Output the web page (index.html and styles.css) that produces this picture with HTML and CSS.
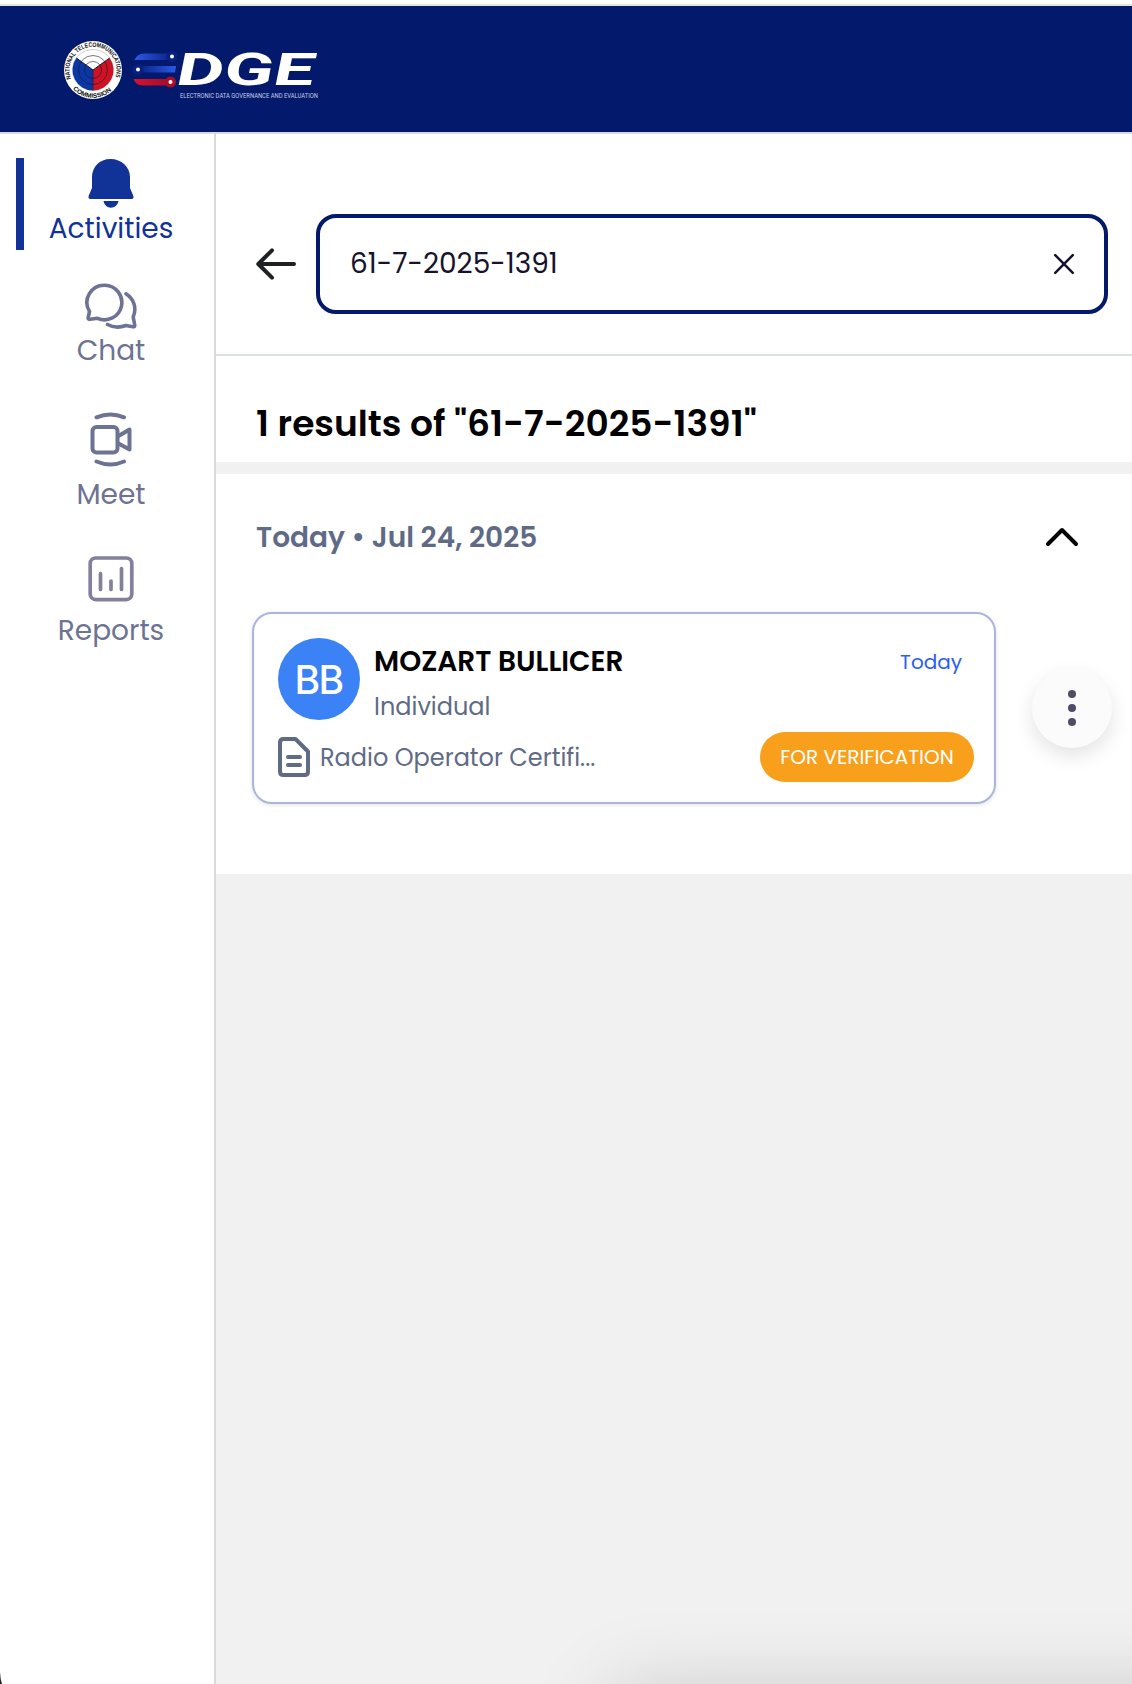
FILE: index.html
```html
<!DOCTYPE html>
<html lang="en">
<head>
<meta charset="utf-8">
<title>EDGE</title>
<link rel="stylesheet" href="styles.css">
</head>
<body>
<div class="app">
  <header class="topbar">
    <svg class="brand" viewBox="60 36 264 68" width="264" height="68" role="img" aria-label="EDGE">
      <defs>
        <path id="sealTop" d="M71.4 79.5A23.5 23.5 0 1 1 114.6 79.5"/>
        <path id="sealBottom" d="M71.5 87.5A27.6 27.6 0 0 0 114.5 87.5"/>
        <linearGradient id="barTop" x1="0" x2="1"><stop offset="0" stop-color="#2b59e8"/><stop offset="1" stop-color="#0a2080"/></linearGradient>
        <linearGradient id="barMid" x1="0" x2="1"><stop offset="0" stop-color="#0a2080"/><stop offset="1" stop-color="#2b59e8"/></linearGradient>
        <linearGradient id="barLow" x1="0" x2="1"><stop offset="0" stop-color="#d8122b"/><stop offset="1" stop-color="#a40c2c"/></linearGradient>
      </defs>
      <circle cx="93" cy="70" r="29" fill="#fff"/>
      <path d="M93 70V90.5A20.5 20.5 0 0 1 76.4 58Z" fill="#0a37a5"/>
      <path d="M93 70V90.5A20.5 20.5 0 0 0 109.6 58Z" fill="#d01225"/>
      <g fill="none" stroke="#1a1a2a" stroke-width=".6">
        <circle cx="93" cy="70" r="8.5"/><circle cx="93" cy="70" r="14.5"/><circle cx="93" cy="70" r="20.5" stroke-opacity=".35"/>
        <path d="M76.4 58 93 70 109.6 58" stroke-width="1"/><path d="M93 70V90.5"/>
      </g>
      <text class="seal-text"><textPath href="#sealTop" textLength="89" lengthAdjust="spacingAndGlyphs" startOffset="1">NATIONAL TELECOMMUNICATIONS</textPath></text>
      <text class="seal-text"><textPath href="#sealBottom" textLength="43" lengthAdjust="spacingAndGlyphs" startOffset="2">COMMISSION</textPath></text>
      <path d="M134.500 60Q137 53.500 144 53.500H173V60Z" fill="url(#barTop)"/>
      <path d="M138 66H176L175 72.500H138Z" fill="url(#barMid)"/>
      <path d="M133.500 79H170V85.500H143Q136 85.500 133.500 79Z" fill="url(#barLow)"/>
      <circle cx="172" cy="56.500" r="5.500" fill="#0a2080"/><circle cx="138" cy="69.500" r="5.500" fill="#0a2080"/><circle cx="170.500" cy="82" r="5.500" fill="#a90d2c"/>
      <g fill="#fff"><circle cx="172" cy="56.500" r="2"/><circle cx="138" cy="69.500" r="2"/><circle cx="170.500" cy="82" r="2"/></g>
      <text class="wordmark" transform="translate(178 85) skewX(5)" textLength="138" lengthAdjust="spacingAndGlyphs">DGE</text>
      <text class="tagline" x="180" y="97.500" textLength="138" lengthAdjust="spacingAndGlyphs">ELECTRONIC DATA GOVERNANCE AND EVALUATION</text>
    </svg>
  </header>
  <div class="body">
    <nav class="sidebar">
      <a class="nav nav-active">
        <svg viewBox="86 158 50 50" width="50" height="50"><path d="M110.500 159C99.500 159 92 167 92 177V188L88.800 195.500C88 197.500 88.600 199 90.500 199H131.500C133.400 199 134 197.500 133.200 195.500L130 188V177C130 167 121.500 159 110.500 159ZM103.500 201H118.500C117.500 205.500 114.500 207.700 111 207.700S104.500 205.500 103.500 201Z" fill="currentColor"/></svg>
        <span>Activities</span>
      </a>
      <a class="nav nav-chat">
        <svg viewBox="83.500 282 54 48" width="54" height="48" fill="none" stroke="currentColor" stroke-width="3.600" stroke-linecap="round" stroke-linejoin="round"><path d="M104.500 285.200A17.300 17.300 0 1 1 97 318.300L89.500 319.300C87.800 319.500 87.400 318.600 87.800 317L89 311.500A17.300 17.300 0 0 1 104.500 285.200Z"/><path d="M125.500 293.800C133.500 299 136.500 308 132.700 317L134.200 325C134.400 326.400 133.600 327 132.200 326.700L125.500 325.500C119 327.800 112.500 327.500 107 324.500" /></svg>
        <span>Chat</span>
      </a>
      <a class="nav nav-meet">
        <svg viewBox="86 410 50 60" width="50" height="60" fill="none" stroke="currentColor" stroke-width="4" stroke-linecap="round" stroke-linejoin="round"><rect x="92.500" y="427" width="25" height="25.500" rx="4"/><path d="M118.500 436 129.500 429.500V449.500L118.500 443.500M96.500 417.300Q110.500 411.800 124 417.300M96.500 461.500Q110.500 467.500 124 461.500"/></svg>
        <span>Meet</span>
      </a>
      <a class="nav nav-reports">
        <svg viewBox="86 554 50 50" width="50" height="50" fill="none" stroke="#82809a" stroke-width="3.700" stroke-linecap="round"><rect x="90.200" y="558" width="41.600" height="41.600" rx="5.500"/><path d="M100.500 573.500V589.500M111 581V589.500M121.500 568.500V589.500"/></svg>
        <span>Reports</span>
      </a>
    </nav>
    <main class="main">
      <section class="search">
        <svg viewBox="256 246 40 36" width="40" height="36" fill="none" stroke="#202124" stroke-width="4" stroke-linecap="round" stroke-linejoin="round"><path d="M294 264H258.500M272 250.300 258.300 264 272 277.700"/></svg>
        <div class="field">
          <span>61-7-2025-1391</span>
          <svg viewBox="1053 253 22 22" width="22" height="22" stroke="#17132c" stroke-width="2.500" stroke-linecap="round"><path d="M1055.200 255.200 1072.800 272.800M1072.800 255.200 1055.200 272.800"/></svg>
        </div>
      </section>
      <h1 class="title">1 results of "61-7-2025-1391"</h1>
      <section class="group">
        <div class="group-head">
          <h2 class="date">Today • Jul 24, 2025</h2>
          <svg viewBox="1044 525 36 24" width="36" height="24" fill="none" stroke="#000" stroke-width="4" stroke-linecap="round" stroke-linejoin="round"><path d="M1048 544 1062 530 1076 544"/></svg>
        </div>
        <div class="row">
          <article class="card">
            <div class="person">
              <div class="avatar">BB</div>
              <div class="who">
                <div class="who-top"><span class="name">MOZART BULLICER</span><span class="when">Today</span></div>
                <div class="kind">Individual</div>
              </div>
            </div>
            <div class="service">
              <svg viewBox="278 737 32 40" width="32" height="40" fill="none" stroke="#5f6b85" stroke-width="4" stroke-linecap="round" stroke-linejoin="round"><path d="M283.500 739H295.500L308 751.500V771.500Q308 775 304.500 775H283.500Q280 775 280 771.500V742.500Q280 739 283.500 739ZM288 757H300M288 765H300"/></svg>
              <span class="service-name">Radio Operator Certifi...</span>
              <span class="pill">FOR VERIFICATION</span>
            </div>
          </article>
          <div class="more"><i></i><i></i><i></i></div>
        </div>
      </section>
      <div class="rest"></div>
    </main>
  </div>
  <div class="dock-shadow"></div>
  <svg class="corner" viewBox="0 0 4 14" width="4" height="14"><path d="M0 2Q.3 9 2 14H0Z" fill="#222"/></svg>
</div>
</body>
</html>
```
FILE: styles.css
```css
* { box-sizing: border-box; }
body { margin: 0; font-family: Poppins, Inter, "Open Sans", sans-serif; background: #fff; }
h1, h2 { margin: 0; font-weight: 600; }
svg { display: block; flex: none; }
span { white-space: nowrap; }
.app { position: relative; display: flex; flex-direction: column; height: 1684px; overflow: hidden; padding-top: 4px; }
.topbar { height: 130px; flex: none; background: #03196c; border-top: 2px solid #e2e4e3; border-bottom: 2px solid #d9d9dc; padding: 30px 60px; }
.brand { overflow: visible; }
.seal-text { font: 700 6.400px "Liberation Sans", sans-serif; fill: #111; }
.wordmark { font: italic 700 45px Roboto, sans-serif; fill: #fff; }
.tagline { font: 400 7px Roboto, sans-serif; fill: #c5cbe6; }
.body { display: flex; flex: 1; min-height: 0; }

.sidebar { width: 216px; flex: none; border-right: 2px solid #d9d9d9; padding: 24px 8px 0 0; color: #6d7393; font-size: 28px; line-height: 41px; }
.nav { display: flex; flex-direction: column; align-items: center; }
.nav-active { height: 92px; margin-left: 16px; padding-right: 8px; border-left: 8px solid #113296; color: #113296; }
.nav-chat { margin: 32px 0 0 16px; }
.nav-meet { margin: 39px 0 0 16px; }
.nav-meet svg { margin-bottom: 4px; }
.nav-reports { margin: 39px 0 0 16px; }
.nav-reports svg { margin-bottom: 6px; }

.main { flex: 1; display: flex; flex-direction: column; min-width: 0; }
.search { display: flex; align-items: center; gap: 20px; height: 222px; padding: 80px 24px 40px 40px; border-bottom: 2px solid #dbe0e3; }
.field { flex: 1; height: 100px; display: flex; align-items: center; justify-content: space-between; border: 4px solid #03196c; border-radius: 20px; padding: 0 29px 0 30px; color: #17132c; font-size: 28px; line-height: 42px; }
.title { height: 118px; border-bottom: 12px solid #f1f1f1; padding: 42px 0 0 40px; font-size: 36px; line-height: 52px; }
.group { height: 400px; padding: 42px 20px 0 36px; }
.group-head { display: flex; justify-content: space-between; align-items: center; height: 42px; padding: 0 32px 0 4px; color: #5f6b85; font-size: 28px; line-height: 42px; }
.date { font-size: inherit; line-height: 40px; padding-top: 2px; }
.row { display: flex; align-items: center; justify-content: space-between; margin-top: 54px; }
.card { width: 744px; height: 192px; border: 2px solid #a9b5de; border-radius: 20px; padding: 24px 20px 0 24px; box-shadow: 0 1px 4px rgba(0, 0, 0, .12); }
.person { display: flex; gap: 14px; height: 82px; }
.avatar { width: 82px; height: 82px; flex: none; border-radius: 50%; background: #3b82f6; color: #fff; display: flex; align-items: center; justify-content: center; font: 500 39px Inter, sans-serif; letter-spacing: -1.5px; padding-right: 1px; }
.who { flex: 1; }
.who-top { display: flex; justify-content: space-between; padding-right: 12px; line-height: 47px; }
.name { font-size: 28px; font-weight: 600; }
.when { font-size: 20px; line-height: 49px; height: 47px; color: #2b5df0; }
.kind { font-size: 24px; line-height: 44px; color: #5f6b85; }
.service { display: flex; align-items: center; height: 50px; margin-top: 12px; }
.service-name { margin-left: 10px; font-size: 24px; line-height: 36px; padding-top: 2px; color: #5f6b85; }
.pill { margin-left: auto; width: 214px; height: 50px; border-radius: 25px; background: #f8a01c; color: #fff; font-size: 20px; line-height: 50px; text-align: center; }
.more { width: 80px; height: 80px; border-radius: 50%; background: #fbfbfb; box-shadow: 0 8px 20px rgba(0, 0, 0, .11); display: flex; flex-direction: column; align-items: center; justify-content: center; gap: 6px; }
.more i { width: 8px; height: 8px; border-radius: 50%; background: #4f4b69; }
.rest { flex: 1; background: #f1f1f1; }
.dock-shadow { position: absolute; left: 610px; right: -100px; top: 1692px; height: 200px; border-radius: 20px; box-shadow: 0 0 84px rgba(0, 0, 0, .17); }
.corner { position: absolute; left: 0; bottom: 0; }
```
